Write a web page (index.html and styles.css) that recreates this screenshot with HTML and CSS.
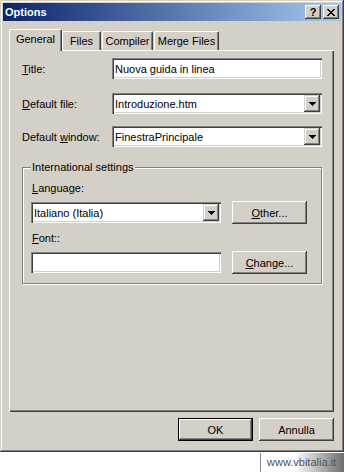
FILE: index.html
```html
<!DOCTYPE html>
<html lang="it">
<head>
  <meta charset="UTF-8">
  <title>Options</title>
  <link rel="stylesheet" href="styles.css">
</head>
<body>
  <div class="window">
    <div class="titlebar">
      <span class="caption">Options</span>
      <div class="caption-buttons">
        <button class="cap-btn help">?</button>
        <button class="cap-btn">
          <svg width="8" height="7" viewBox="0 0 8 7" shape-rendering="crispEdges">
            <path d="M0 0h2v1H0zM6 0h2v1H6zM1 1h2v1H1zM5 1h2v1H5zM2 2h4v1H2zM3 3h2v1H3zM2 4h4v1H2zM1 5h2v1H1zM5 5h2v1H5zM0 6h2v1H0zM6 6h2v1H6z" fill="#000"/>
          </svg>
        </button>
      </div>
    </div>

    <div class="content">
      <div class="tabs">
        <div class="tab active">General</div>
        <div class="tab w-files">Files</div>
        <div class="tab w-compiler">Compiler</div>
        <div class="tab w-merge">Merge Files</div>
      </div>

      <div class="panel">
        <div class="row">
          <span class="label"><u>T</u>itle:</span>
          <div class="field">Nuova guida in linea</div>
        </div>
        <div class="row row-file">
          <span class="label"><u>D</u>efault file:</span>
          <div class="field combo">
            <span class="combo-text">Introduzione.htm</span>
            <span class="drop">
              <svg width="7" height="4" viewBox="0 0 7 4" shape-rendering="crispEdges"><path d="M0 0h7v1H0zM1 1h5v1H1zM2 2h3v1H2zM3 3h1v1H3z" fill="#000"/></svg>
            </span>
          </div>
        </div>
        <div class="row row-window">
          <span class="label">Default <u>w</u>indow:</span>
          <div class="field combo">
            <span class="combo-text">FinestraPrincipale</span>
            <span class="drop">
              <svg width="7" height="4" viewBox="0 0 7 4" shape-rendering="crispEdges"><path d="M0 0h7v1H0zM1 1h5v1H1zM2 2h3v1H2zM3 3h1v1H3z" fill="#000"/></svg>
            </span>
          </div>
        </div>

        <fieldset class="group">
          <legend>International settings</legend>
          <div class="group-label"><u>L</u>anguage:</div>
          <div class="group-row">
            <div class="field combo small">
              <span class="combo-text">Italiano (Italia)</span>
              <span class="drop">
                <svg width="7" height="4" viewBox="0 0 7 4" shape-rendering="crispEdges"><path d="M0 0h7v1H0zM1 1h5v1H1zM2 2h3v1H2zM3 3h1v1H3z" fill="#000"/></svg>
              </span>
            </div>
            <button class="btn"><u>O</u>ther...</button>
          </div>
          <div class="group-label"><u>F</u>ont::</div>
          <div class="group-row">
            <div class="field small"></div>
            <button class="btn"><u>C</u>hange...</button>
          </div>
        </fieldset>
      </div>

      <div class="footer">
        <button class="btn default">OK</button>
        <button class="btn">Annulla</button>
      </div>
    </div>
  </div>
  <div class="watermark">www.vbitalia.it</div>
</body>
</html>
```

FILE: styles.css
```css
body {
  margin: 0;
  background-color: #ffffff;
  font-family: "Liberation Sans", Arial, sans-serif;
  font-size: 11px;
  color: #000;
}

.window {
  width: 344px;
  height: 452px;
  box-sizing: border-box;
  padding: 3px;
  background-color: #d4d0c8;
  box-shadow: inset -1px -1px #404040, inset 1px 1px #d4d0c8,
              inset -2px -2px #808080, inset 2px 2px #ffffff;
}

/* title bar */
.titlebar {
  height: 18px;
  display: flex;
  align-items: center;
  justify-content: space-between;
  padding: 0 2px 0 2px;
  background: linear-gradient(to right, #0a246a, #a6caf0);
}

.caption {
  color: #ffffff;
  font-weight: bold;
  font-size: 11px;
}

.caption-buttons {
  display: flex;
  gap: 2px;
}

.cap-btn {
  width: 16px;
  height: 14px;
  padding: 0;
  border: none;
  display: flex;
  align-items: center;
  justify-content: center;
  background-color: #d4d0c8;
  box-shadow: inset -1px -1px #404040, inset 1px 1px #ffffff, inset -2px -2px #808080;
  font-family: "Liberation Sans", Arial, sans-serif;
}

.cap-btn.help {
  font-weight: bold;
  font-size: 11px;
  line-height: 14px;
}

/* body */
.content {
  padding: 8px 4px 0 6px;
}

.tabs {
  display: flex;
  align-items: flex-end;
  height: 21px;
}

.tab {
  height: 19px;
  box-sizing: border-box;
  display: flex;
  align-items: center;
  justify-content: center;
  border-top: 1px solid #ffffff;
  border-left: 1px solid #ffffff;
  border-right: 1px solid #404040;
  border-radius: 2px 2px 0 0;
  box-shadow: inset -1px 0 #808080;
  background-color: #d4d0c8;
  padding-bottom: 1px;
}

.tab.active {
  width: 53px;
  height: 22px;
  margin-bottom: -1px;
  position: relative;
  z-index: 1;
  padding-bottom: 3px;
}

.w-files { width: 39px; }
.w-compiler { width: 51px; margin-left: 1px; }
.w-merge { width: 65px; margin-left: 1px; }

.panel {
  width: 325px;
  height: 362px;
  box-sizing: border-box;
  padding: 8px 0 0 13px;
  box-shadow: inset 1px 1px #ffffff, inset -1px -1px #404040, inset -2px -2px #808080;
}

.row {
  display: flex;
  align-items: center;
}

.row-file { margin-top: 14px; }
.row-window { margin-top: 12px; }

.label {
  width: 90px;
}

.field {
  width: 210px;
  height: 21px;
  box-sizing: border-box;
  display: flex;
  align-items: center;
  padding-left: 3px;
  background-color: #ffffff;
  box-shadow: inset 1px 1px #808080, inset 2px 2px #404040,
              inset -1px -1px #ffffff, inset -2px -2px #d4d0c8;
}

.combo {
  justify-content: space-between;
  padding-right: 2px;
}

.drop {
  width: 16px;
  height: 17px;
  display: flex;
  align-items: center;
  justify-content: center;
  background-color: #d4d0c8;
  box-shadow: inset -1px -1px #404040, inset 1px 1px #d4d0c8,
              inset -2px -2px #808080, inset 2px 2px #ffffff;
}

/* group box */
.group {
  width: 300px;
  box-sizing: border-box;
  margin: 14px 0 0 0;
  padding: 0 0 9px 8px;
  border: 1px solid #808080;
  box-shadow: inset 1px 1px #ffffff, 1px 1px #ffffff;
}

.group legend {
  padding: 0 1px;
  line-height: 13px;
  background-color: #d4d0c8;
}

.group-label {
  margin-top: 8px;
  line-height: 13px;
  padding-left: 1px;
}

.group-row {
  display: flex;
  align-items: center;
  gap: 11px;
  margin-top: 6px;
}

.field.small {
  width: 190px;
}

.btn {
  width: 75px;
  height: 23px;
  padding: 0;
  border: none;
  background-color: #d4d0c8;
  font-family: "Liberation Sans", Arial, sans-serif;
  font-size: 11px;
  color: #000;
  box-shadow: inset -1px -1px #404040, inset 1px 1px #ffffff,
              inset -2px -2px #808080, inset 2px 2px #d4d0c8;
}

.btn.default {
  box-shadow: inset 0 0 0 1px #000000, inset -2px -2px #404040, inset 2px 2px #ffffff,
              inset -3px -3px #808080;
}

.footer {
  display: flex;
  justify-content: flex-end;
  gap: 6px;
  margin-top: 6px;
  padding-right: 3px;
}

.watermark {
  margin-left: 260px;
  width: 84px;
  height: 19px;
  box-sizing: border-box;
  margin-top: 1px;
  padding-left: 6px;
  line-height: 19px;
  color: #505050;
  border-left: 1px solid #8a8a8a;
  background: linear-gradient(to right, #ffffff 40%, #6e6e6e);
}
```
